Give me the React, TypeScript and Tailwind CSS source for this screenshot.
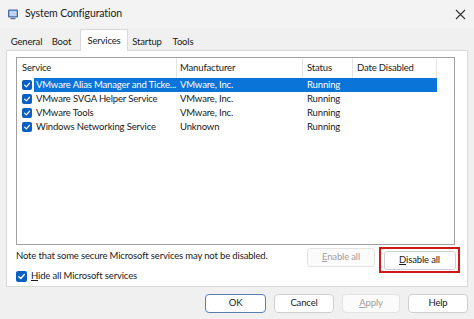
import React from "react";

const font = { fontFamily: 'Lato, "Noto Sans", sans-serif' };

function Check({ size = 10 }: { size?: number }) {
  return (
    <span
      className="inline-flex items-center justify-center rounded-[2px] bg-[#0a5fc4] shrink-0"
      style={{ width: size, height: size }}
    >
      <svg width={size - 2} height={size - 2} viewBox="0 0 10 10">
        <path d="M2 5.2 L4.2 7.3 L8.2 2.8" stroke="white" strokeWidth="1.5" fill="none" strokeLinecap="round" strokeLinejoin="round" />
      </svg>
    </span>
  );
}

const rows = [
  { name: "VMware Alias Manager and Ticke...", mfr: "VMware, Inc.", status: "Running", sel: true },
  { name: "VMware SVGA Helper Service", mfr: "VMware, Inc.", status: "Running" },
  { name: "VMware Tools", mfr: "VMware, Inc.", status: "Running" },
  { name: "Windows Networking Service", mfr: "Unknown", status: "Running" },
];

export default function App() {
  return (
    <div className="w-[474px] h-[319px] bg-[#f0f0f0] overflow-hidden text-[9.5px] tracking-[-0.15px] text-[#1a1a1a] flex flex-col whitespace-nowrap" style={font}>
      {/* title bar */}
      <div className="h-[28px] bg-[#f3f3f3] flex items-center pl-[7px] pr-[8px] shrink-0">
        <svg width="12" height="12" viewBox="0 0 12 12" className="mr-[6px]">
          <rect x="1" y="1.5" width="10" height="8" rx="1" fill="#4b6aa8" />
          <rect x="2.3" y="2.8" width="7.4" height="5.4" fill="#bcd3f2" />
          <rect x="3.5" y="10" width="5" height="1.2" fill="#5a6f95" />
        </svg>
        <span className="text-[10.5px] tracking-[-0.1px] text-[#202020]">System Configuration</span>
        <div className="flex-1" />
        <svg width="11" height="11" viewBox="0 0 11 11">
          <path d="M1 1 L10 10 M10 1 L1 10" stroke="#333" strokeWidth="1.1" />
        </svg>
      </div>

      {/* tabs */}
      <div className="h-[22px] flex items-end pl-[6px] shrink-0">
        <div className="h-[19px] w-[41px] flex items-center justify-center pt-[3px]">General</div>
        <div className="h-[19px] w-[29px] flex items-center justify-center pt-[3px]">Boot</div>
        <div className="h-[22px] w-[48px] ml-[4px] flex items-start justify-center pt-[4px] bg-white border border-[#d9d9d9] border-b-0 -mb-px z-10">Services</div>
        <div className="h-[19px] w-[38px] flex items-center justify-center pt-[3px]">Startup</div>
        <div className="h-[19px] w-[34px] flex items-center justify-center pt-[3px]">Tools</div>
      </div>

      {/* panel */}
      <div className="mx-[6px] h-[237px] bg-white border border-[#d9d9d9] pt-[6px] pl-[9px] pr-[12px] flex flex-col shrink-0">
        <div className="h-[188px] border border-[#a0a0a0] bg-white shrink-0">
          <div className="h-[20px] flex items-center">
            <div className="w-[160px] h-full pl-[5px] flex items-center border-r border-[#e5e5e5]">Service</div>
            <div className="w-[126px] h-full pl-[3px] flex items-center border-r border-[#e5e5e5]">Manufacturer</div>
            <div className="w-[50px] h-full pl-[4px] flex items-center border-r border-[#e5e5e5]">Status</div>
            <div className="w-[84px] h-full pl-[4px] flex items-center border-r border-[#e5e5e5]">Date Disabled</div>
          </div>
          {rows.map((r, i) => (
            <div key={i} className="h-[14px] flex items-center">
              <div className="w-[17px] pl-[5px] flex items-center">
                <Check />
              </div>
              <div className={`w-[403px] h-full flex items-center ${r.sel ? "bg-[#0a74d8] text-white" : ""}`}>
                <div className="w-[143px] pl-[2px]">{r.name}</div>
                <div className="w-[126px] pl-[3px]">{r.mfr}</div>
                <div className="w-[50px] pl-[4px]">{r.status}</div>
                <div className="w-[84px]" />
              </div>
            </div>
          ))}
        </div>

        <div className="flex items-start mt-[2px]">
          <div className="pt-[2px] flex-1">Note that some secure Microsoft services may not be disabled.</div>
          <div className="mt-[1px] w-[68px] h-[19px] border border-[#e3e3e3] bg-[#fbfbfb] rounded-[3px] flex items-center justify-center text-[#a0a0a0]">
            <span><span className="underline">E</span>nable all</span>
          </div>
          <div className="ml-[4px] mr-[-5px] w-[81px] h-[26px] border-2 border-[#d01818] flex items-center justify-center">
            <div className="w-[72px] h-[19px] border border-[#d0d0d0] bg-white rounded-[3px] flex items-center justify-center">
              <span><span className="underline">D</span>isable all</span>
            </div>
          </div>
        </div>

        <div className="flex items-center mt-[-4px] gap-[4px]">
          <Check size={11} />
          <span><span className="underline">H</span>ide all Microsoft services</span>
        </div>
      </div>

      {/* buttons */}
      <div className="flex-1 flex items-start justify-end pt-[7px] pr-[6px] gap-[8px]">
        <div className="w-[61px] h-[19px] rounded-[4px] border border-[#5b7fb0] bg-white flex items-center justify-center">OK</div>
        <div className="w-[60px] h-[19px] rounded-[4px] border border-[#d0d0d0] bg-white flex items-center justify-center">Cancel</div>
        <div className="w-[58px] h-[19px] rounded-[4px] border border-[#e3e3e3] bg-[#fbfbfb] flex items-center justify-center text-[#a0a0a0]">
          <span><span className="underline">A</span>pply</span>
        </div>
        <div className="w-[60px] h-[19px] rounded-[4px] border border-[#d0d0d0] bg-white flex items-center justify-center">Help</div>
      </div>
    </div>
  );
}
